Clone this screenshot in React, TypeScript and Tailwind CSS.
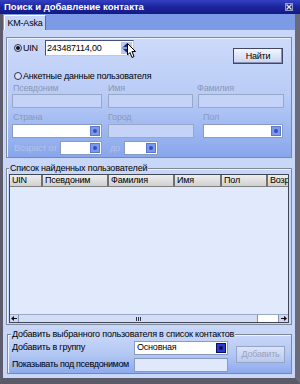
import React from 'react';

const font = "font-['Liberation_Sans','DejaVu_Sans',sans-serif]";
const txt = "text-[9px] tracking-[-0.2px] whitespace-nowrap";

function Radio({ checked }: { checked?: boolean }) {
    return (
        <span className="flex items-center justify-center w-[8px] h-[8px] rounded-full border border-[#303040] bg-[#d8e2fa]">
            {checked && <span className="w-[4px] h-[4px] rounded-full bg-[#101020]" />}
        </span>
    );
}

function DropBtn({ dark }: { dark?: boolean }) {
    return (
        <span className={dark
            ? "flex items-center justify-center w-[10px] h-[10px] border border-[#101060] bg-[#2a3ad8]"
            : "flex items-center justify-center w-[10px] h-[10px] border border-[#5a78d0] bg-[#7c98e8]"}>
            <span className={dark ? "w-[4px] h-[4px] rounded-full bg-[#101040]" : "w-[4px] h-[4px] rounded-full bg-[#3050c0]"} />
        </span>
    );
}

function Combo({ w, text, dark }: { w: string; text?: string; dark?: boolean }) {
    return (
        <div className={`${w} h-[14px] flex items-center justify-between bg-white border border-[#8a9ac0] pl-[2px] pr-[1px]`}>
            <span className={`${txt} leading-none text-black`}>{text}</span>
            <DropBtn dark={dark} />
        </div>
    );
}

function Field({ w }: { w: string }) {
    return <div className={`${w} h-[14px] bg-[#c4d3f7] border border-[#9aa8c8]`} />;
}

function Label({ children, w, light }: { children: React.ReactNode; w?: string; light?: boolean }) {
    return <span className={`${w ?? ''} ${txt} leading-[10px] ${light ? 'text-[#b4c2e6]' : 'text-[#8a98b8]'}`}>{children}</span>;
}

export default function App() {
    const cols = [
        { t: 'UIN', w: 'w-[33px]' },
        { t: 'Псевдоним', w: 'w-[66px]' },
        { t: 'Фамилия', w: 'w-[66px]' },
        { t: 'Имя', w: 'w-[47px]' },
        { t: 'Пол', w: 'w-[46px]' },
        { t: 'Возр', w: 'w-[24px]' },
    ];

    return (
        <div className={`${font} relative w-[300px] h-[384px] flex flex-col bg-[#4a4a58] overflow-hidden select-none`}>
            {/* Title bar */}
            <div className="h-[14px] flex items-center justify-between px-[4px] bg-gradient-to-b from-[#3440c4] via-[#1c249c] to-[#141a84]">
                <span className="text-[9.5px] font-bold text-white leading-none whitespace-nowrap">Поиск и добавление контакта</span>
                <span className="mr-[3px] flex items-center justify-center w-[8px] h-[8px] border border-[#9098c8] bg-[#2a2e70]">
                    <svg width="6" height="6" viewBox="0 0 6 6"><path d="M0.5 0.5 L5.5 5.5 M5.5 0.5 L0.5 5.5" stroke="#e0e4ff" strokeWidth="1.2" /></svg>
                </span>
            </div>

            {/* Body frame */}
            <div className="flex-1 flex flex-col border-l-[3px] border-r-[5px] border-b-[6px] border-l-[#5c5c6c] border-r-[#6a6a78] border-b-[#5a5a68]">
                {/* Tab strip */}
                <div className="h-[16px] flex items-end bg-[#7b9be6] pl-[1px]">
                    <div className="h-[15px] w-[42px] flex items-center justify-center bg-[#c6d5f7] border-t border-l border-white border-r border-r-[#5a6a98]">
                        <span className={`${txt} leading-none text-black`}>KM-Aska</span>
                    </div>
                </div>

                {/* Panel */}
                <div className="flex-1 flex flex-col bg-[#c8d6f8] px-[3px] pt-[7px]">
                    {/* Group 1 */}
                    <div className="h-[121px] flex flex-col border border-[#7f8898] shadow-[inset_1px_1px_0_#eef2ff] bg-gradient-to-b from-[#ccdafa] via-[#b8cbf6] to-[#88a6ec]">
                        <div className="flex items-start mt-[2px]">
                            <div className="flex items-center ml-[7px] h-[16px] w-[31px]">
                                <Radio checked />
                                <span className={`ml-[1px] ${txt} leading-none text-black`}>UIN</span>
                            </div>
                            <div className="w-[89px] h-[16px] flex items-center justify-between bg-white border border-[#405080] border-r-[#c0c8e0] border-b-[#c0c8e0] pl-[1px] pr-[1px]">
                                <span className={`${txt} leading-none text-black`}>243487114,00</span>
                                <svg width="11" height="12" viewBox="0 0 11 12">
                                    <rect x="0" y="0" width="11" height="12" fill="#b8c8f0" />
                                    <path d="M2 5 L5.5 1.5 L9 5 Z" fill="#203070" />
                                    <path d="M2 7 L5.5 10.5 L9 7 Z" fill="#203070" />
                                    <rect x="1" y="5.5" width="9" height="1" fill="#5070c8" />
                                </svg>
                            </div>
                            <button className="ml-auto mr-[8px] mt-[8px] w-[50px] h-[16px] flex items-center justify-center bg-gradient-to-b from-[#f4f6ff] to-[#c8d4f0] border border-[#404868] shadow-[inset_-1px_-1px_0_#8890b0]">
                                <span className={`${txt} leading-none text-black`}>Найти</span>
                            </button>
                        </div>
                        <div className="flex items-center ml-[7px] mt-[8px] h-[8px]">
                            <Radio />
                            <span className={`ml-[1px] ${txt} leading-none text-black`}>Анкетные данные пользователя</span>
                        </div>
                        <div className="flex mt-[3px] h-[10px]">
                            <Label w="ml-[6px] w-[95px]">Псевдоним</Label>
                            <Label w="w-[89px]">Имя</Label>
                            <Label>Фамилия</Label>
                        </div>
                        <div className="flex mt-[1px] ml-[5px]">
                            <Field w="w-[90px]" />
                            <div className="ml-[6px]"><Field w="w-[85px]" /></div>
                            <div className="ml-[5px]"><Field w="w-[86px]" /></div>
                        </div>
                        <div className="flex mt-[4px] h-[10px]">
                            <Label w="ml-[6px] w-[95px]">Страна</Label>
                            <Label w="w-[95px]">Город</Label>
                            <Label>Пол</Label>
                        </div>
                        <div className="flex mt-[2px] ml-[5px]">
                            <Combo w="w-[90px]" />
                            <div className="ml-[6px]"><Field w="w-[86px]" /></div>
                            <div className="ml-[9px]"><Combo w="w-[80px]" /></div>
                        </div>
                        <div className="flex items-center mt-[3px] ml-[7px]">
                            <Label w="w-[46px]" light>Возраст от</Label>
                            <Combo w="w-[42px]" />
                            <Label w="ml-[8px] w-[14px]" light>до</Label>
                            <Combo w="w-[34px]" />
                        </div>
                    </div>

                    {/* Group 2 */}
                    <div className="relative mt-[10px] h-[157px] border border-[#7f8898] shadow-[inset_1px_1px_0_#eef2ff] flex flex-col px-[2px] pb-[1px] pt-[5px]">
                        <span className={`absolute left-[2px] top-[-6px] px-[1px] bg-[#c8d6f8] ${txt} leading-[10px] text-black`}>Список найденных пользователей</span>
                        <div className="flex-1 flex flex-col border border-[#404858] bg-[#e1e9fd] overflow-hidden">
                            <div className="flex h-[12px] bg-[#d8d8dc]">
                                {cols.map((c) => (
                                    <div key={c.t} className={`${c.w} shrink-0 h-[12px] flex items-center pl-[2px] border-r-2 border-r-[#707070] border-b border-b-[#808080] bg-gradient-to-b from-[#eeeeee] to-[#d0d0d0] overflow-hidden`}>
                                        <span className={`${txt} leading-none text-black`}>{c.t}</span>
                                    </div>
                                ))}
                            </div>
                            <div className="flex-1" />
                            <div className="h-[8px] flex items-stretch border-t border-[#9aa8c8]">
                                <div className="w-[9px] flex items-center justify-center bg-[#d0d8f0] border-r border-[#8090b0]">
                                    <svg width="6" height="5" viewBox="0 0 6 5"><path d="M0 2.5 L3 0 L3 5 Z M3 2 H6 V3 H3 Z" fill="#101010" /></svg>
                                </div>
                                <div className="w-[239px] flex items-center justify-center bg-[#d4ddf8] border-r border-[#8090b0]">
                                    <span className="flex gap-[1px]">
                                        <span className="w-[1px] h-[4px] bg-[#303040]" />
                                        <span className="w-[1px] h-[4px] bg-[#303040]" />
                                        <span className="w-[1px] h-[4px] bg-[#303040]" />
                                    </span>
                                </div>
                                <div className="flex-1 bg-white" />
                                <div className="w-[10px] flex items-center justify-center bg-[#d0d8f0] border-l border-[#8090b0]">
                                    <svg width="6" height="5" viewBox="0 0 6 5"><path d="M6 2.5 L3 0 L3 5 Z M0 2 H3 V3 H0 Z" fill="#101010" /></svg>
                                </div>
                            </div>
                        </div>
                    </div>

                    {/* Group 3 */}
                    <div className="relative mt-[9px] ml-[1px] h-[40px] border border-[#7f8898] shadow-[inset_1px_1px_0_#eef2ff] bg-gradient-to-b from-[#c8d6f8] via-[#b4c8f4] to-[#8eaaee] flex items-center">
                        <span className={`absolute left-[3px] top-[-6px] px-[1px] bg-[#c4d4f8] ${txt} leading-[11px] text-black`}>Добавить выбранного пользователя в список контактов</span>
                        <div className="flex flex-col mt-[4px] ml-[4px] gap-[3px]">
                            <div className="flex items-center">
                                <span className={`w-[122px] ${txt} leading-none text-black`}>Добавить в группу</span>
                                <Combo w="w-[94px]" text="Основная" dark />
                            </div>
                            <div className="flex items-center">
                                <span className={`w-[122px] text-[9px] tracking-[-0.35px] whitespace-nowrap leading-none text-black`}>Показывать под псевдонимом</span>
                                <div className="w-[94px] h-[14px] bg-[#e0e8fc] border border-[#8a9ac0]" />
                            </div>
                        </div>
                        <button className="ml-auto mr-[6px] w-[49px] h-[17px] flex items-center justify-center bg-gradient-to-b from-[#dce4fa] to-[#b8c8f0] border border-[#98a4c4]">
                            <span className={`${txt} leading-none text-[#98a2bc]`}>Добавить</span>
                        </button>
                    </div>
                </div>
            </div>

            {/* Mouse cursor over spinner */}
            <svg className="absolute left-[127px] top-[43px]" width="10" height="16" viewBox="0 0 10 16">
                <path d="M0.5 0.5 L0.5 12 L3 9.5 L5 14.5 L7 13.5 L5 8.5 L8.5 8.5 Z" fill="white" stroke="black" strokeWidth="1" />
            </svg>
        </div>
    );
}
